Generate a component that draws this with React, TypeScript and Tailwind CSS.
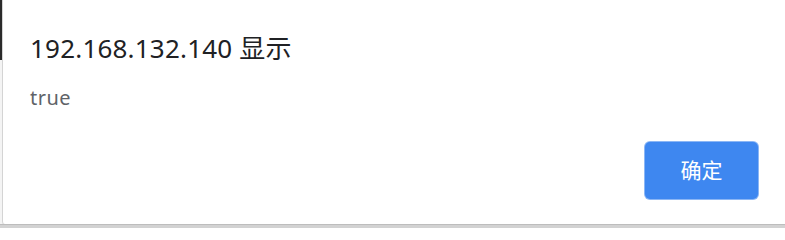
import React from "react";

export default function App() {
  return (
    <div className="w-[785px] h-[228px] bg-[#e6e6e6] flex flex-col overflow-hidden" style={{ fontFamily: '"Noto Sans", "Noto Sans CJK SC", sans-serif' }}>
      <div className="flex flex-1 min-h-0">
        <div className="w-[2px] flex flex-col bg-white">
          <div className="h-[60px] bg-[#2a2a2a]" />
          <div className="flex-1 bg-[#f4f4f4]" />
        </div>
        <div className="flex-1 bg-white border-l border-[#d4d4d4] rounded-bl-[3px] flex flex-col pl-[27px] pr-[27px]">
          <div className="mt-[30px] text-[26px] leading-[36px] text-[#202124] tracking-[0.2px]">192.168.132.140 显示</div>
          <div className="mt-[20px] text-[20px] leading-[24px] text-[#5f6368] tracking-[0.5px]">true</div>
          <div className="flex justify-end mt-[32px]">
            <button className="w-[113px] h-[57px] rounded-[5px] bg-[#3e87f0] text-white text-[21px] flex items-center justify-center shadow-[0_0_0_1px_#8bb6f5]">
              确定
            </button>
          </div>
        </div>
      </div>
      <div className="h-[4px] bg-[#d2d2d2] border-t border-[#bdbdbd]" />
    </div>
  );
}
